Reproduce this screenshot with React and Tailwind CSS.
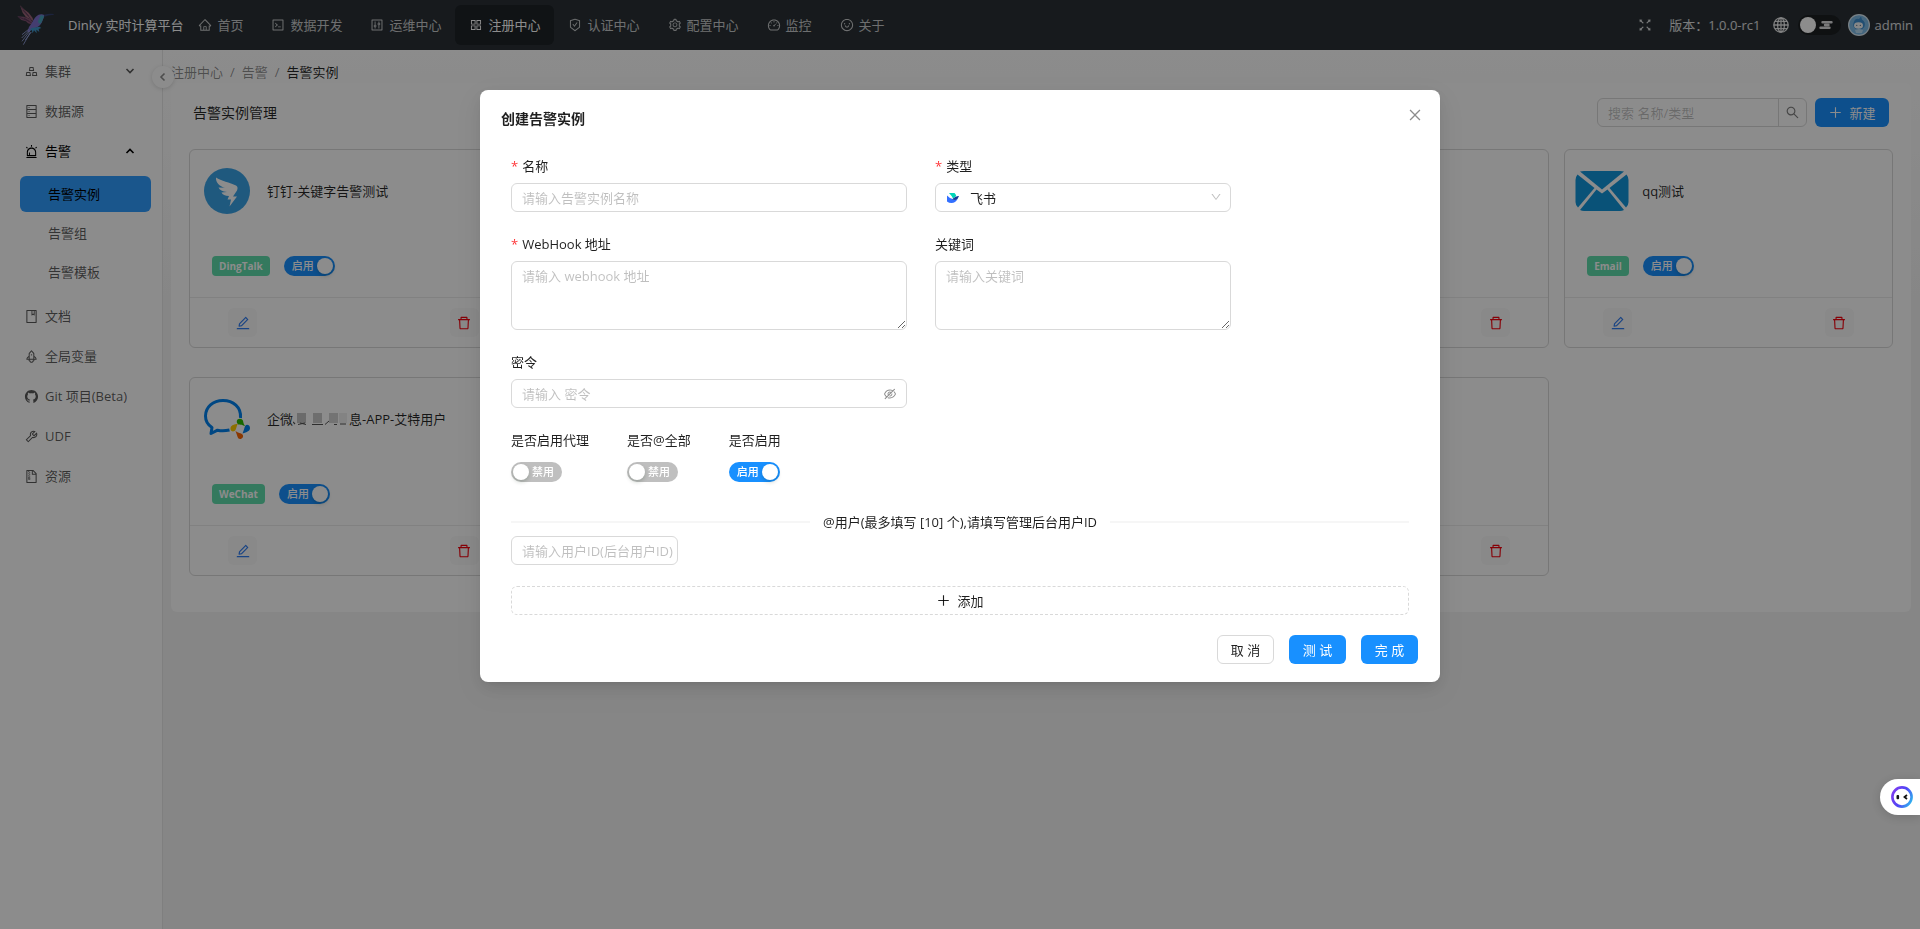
import React from 'react';
import {
  AiOutlineHome,
  AiOutlineCode,
  AiOutlineControl,
  AiOutlineAppstore,
  AiOutlineSafetyCertificate,
  AiOutlineSetting,
  AiOutlineDashboard,
  AiOutlineSmile,
  AiOutlineGold,
  AiOutlineDatabase,
  AiOutlineAlert,
  AiOutlineBook,
  AiOutlineRocket,
  AiFillGithub,
  AiOutlineTool,
  AiOutlineFileZip,
  AiOutlineFullscreen,
  AiOutlineEdit,
  AiOutlineDelete,
  AiOutlineSearch,
  AiOutlinePlus,
  AiOutlineClose,
  AiOutlineDown,
  AiOutlineEyeInvisible,
} from 'react-icons/ai';

const NAV = [
  { label: '首页', icon: AiOutlineHome },
  { label: '数据开发', icon: AiOutlineCode },
  { label: '运维中心', icon: AiOutlineControl },
  { label: '注册中心', icon: AiOutlineAppstore, active: true },
  { label: '认证中心', icon: AiOutlineSafetyCertificate },
  { label: '配置中心', icon: AiOutlineSetting },
  { label: '监控', icon: AiOutlineDashboard },
  { label: '关于', icon: AiOutlineSmile },
];

const MENU = [
  { label: '集群', icon: AiOutlineGold, arrow: 'down' },
  { label: '数据源', icon: AiOutlineDatabase },
  {
    label: '告警',
    icon: AiOutlineAlert,
    arrow: 'up',
    children: ['告警实例', '告警组', '告警模板'],
  },
  { label: '文档', icon: AiOutlineBook },
  { label: '全局变量', icon: AiOutlineRocket },
  { label: 'Git 项目(Beta)', icon: AiFillGithub },
  { label: 'UDF', icon: AiOutlineTool },
  { label: '资源', icon: AiOutlineFileZip },
];

const HummingbirdLogo = () => (
  <svg viewBox="0 0 120 126" className="h-[42px] w-10" aria-hidden="true">
    <path d="M12 4 L24 16 L38 26 L50 42 L52 52 L44 46 L30 40 L20 26 Z" fill="#9c6478" />
    <path d="M4 37 L24 38 L44 46 L52 58 L50 62 L36 58 L30 52 L16 48 Z" fill="#855272" />
    <path d="M14 8 L38 36 M20 18 L44 44 M8 39 L40 52 M24 42 L48 58" stroke="#4a3050" strokeWidth="2" fill="none" />
    <path d="M48 56 Q56 38 68 32 Q78 28 86 34 Q82 44 78 54 Q72 68 58 72 Q46 74 40 84 L34 84 Q38 66 48 56 Z" fill="#7d70cc" />
    <path d="M74 34 Q82 32 84 38 L76 56 Q68 64 66 52 Z" fill="#45a2ba" />
    <path d="M84 32 Q100 28 114 30 L112 33 Q98 32 86 38 Z" fill="#34406f" />
    <path d="M46 72 L70 68 L76 72 L68 75 L70 84 L61 77 L62 88 L54 79 L50 88 L47 78 L40 82 Z" fill="#3f95c8" />
    <path d="M38 76 L18 92 M40 79 L17 102 M41 82 L18 112 M43 85 L22 122 M46 84 L28 108" stroke="#94a1dc" strokeWidth="2.600" fill="none" />
  </svg>
);

const DingTalkLogo = () => (
  <svg viewBox="0 0 46 46" className="h-[46px] w-[46px]" aria-hidden="true">
    <circle cx="23" cy="23" r="23" fill="#3aa2e6" />
    <path
      d="M12 9.500 C17 13 26 14.500 32 17.500 C34 18.500 33.800 20.500 33 22.500 L29 28.500 L33 28.500 L25.500 38.500 L27 31.500 L23.500 31.500 L25 28 C21 28 18.500 26.500 17.500 24.500 L23 24 C18.500 23.500 15.500 22 14.500 19.500 L21 19.800 C15.500 18.500 11.500 14.500 12 9.500 Z"
      fill="#fff"
    />
  </svg>
);

const WeComLogo = () => (
  <svg viewBox="0 0 46 40" className="h-10 w-[46px]" aria-hidden="true">
    <path
      d="M36.500 19 C37.500 8 29 1.500 19 1.500 C9 1.500 1.500 8 1.500 17 C1.500 22 4 26 8 28.500 L7 34.500 L13.500 31.200 C17 32 21 32 25.500 31"
      fill="none"
      stroke="#0082ef"
      strokeWidth="3"
      strokeLinejoin="round"
    />
    <path d="M41.500 26.500 C42.500 25 46 25.800 46 29 C46 32 43 33 38.500 34.500 C40 31 40.300 28.500 41.500 26.500 Z" fill="#0082ef" />
    <path d="M33.500 20.500 C35.500 19 39 19.500 39.300 23 C39.400 24.500 40 25.500 41.500 27.500 C38 25.500 36.500 26 34.500 25.500 C32.500 24.500 32.300 22 33.500 20.500 Z" fill="#2dbc00" />
    <path d="M27 27.500 C28.500 25.500 32 25 34 24.800 C32.500 27 32.500 29 31.500 31 C30 33.500 26.500 32.500 26.500 30 C26.400 29 26.500 28.200 27 27.500 Z" fill="#fc0" />
    <path d="M31.500 32 C34 34 37 34 38.500 35.500 C40 37.500 38.500 40 36 40 C33.500 40 33.500 36.500 31.500 32 Z" fill="#fb6500" />
  </svg>
);

const EmailLogo = () => (
  <svg viewBox="0 0 54 40" className="h-10 w-[54px]" aria-hidden="true">
    <path d="M5 0.500 Q7 0 9 0 H45 Q47 0 49 0.500 L27 18.500 Z" fill="#1296db" />
    <path d="M2.500 3.500 L19.500 17 L3 36.500 Q0.500 34 0.500 31 V9 Q0.500 6 2.500 3.500 Z" fill="#1296db" />
    <path d="M51.500 3.500 L34.500 17 L51 36.500 Q53.500 34 53.500 31 V9 Q53.500 6 51.500 3.500 Z" fill="#1296db" />
    <path d="M5 39 L21.500 18.500 L27 22.500 L32.500 18.500 L49 39 Q47 40 45 40 H9 Q7 40 5 39 Z" fill="#1296db" />
  </svg>
);

const FeishuLogo = () => (
  <svg viewBox="0 0 24 20" className="h-[10px] w-3" aria-hidden="true">
    <path d="M4 0 H15 Q18 3 18.500 6 L12 11 Q9 5 4 0 Z" fill="#00d6b9" />
    <path d="M0 5 Q6 12 15 13.500 Q19 14 21 12 Q17 20 9 20 Q4 20 0 17 Z" fill="#3370ff" />
    <path d="M24 6 Q18 5 12 11 L11 13 Q18 15 21 12 Z" fill="#133c9a" />
  </svg>
);

const GlobeIcon = () => (
  <svg viewBox="0 0 16 16" className="h-4 w-4" fill="none" stroke="currentColor" strokeWidth="1.300" aria-hidden="true">
    <circle cx="8" cy="8" r="7.200" />
    <ellipse cx="8" cy="8" rx="3.400" ry="7.200" />
    <path d="M8 0.800 V15.200 M0.800 8 H15.200 M2 4.300 H14 M2 11.700 H14" />
  </svg>
);

const CloudIcon = () => (
  <svg viewBox="0 0 14 8" className="h-2 w-[14px]" stroke="currentColor" strokeWidth="2.400" strokeLinecap="round" aria-hidden="true">
    <path d="M3.500 1.200 H12.500 M6 4 H9.500 M1.500 6.800 H10.500" />
  </svg>
);

const Chevron = ({ dir }) => (
  <svg viewBox="0 0 10 10" className="h-[10px] w-[10px]" fill="none" stroke="currentColor" strokeWidth="1.600" aria-hidden="true">
    {dir === 'down' && <path d="M1.500 3 L5 6.500 L8.500 3" />}
    {dir === 'up' && <path d="M1.500 7 L5 3.500 L8.500 7" />}
    {dir === 'left' && <path d="M6.500 1.500 L3 5 L6.500 8.500" />}
  </svg>
);

const Avatar = () => (
  <svg viewBox="0 0 22 22" className="h-[22px] w-[22px]" role="img" aria-label="avatar">
    <circle cx="11" cy="11" r="11" fill="#dce9f2" />
    <circle cx="11" cy="11" r="9.800" fill="#7dbbe6" />
    <path d="M5.500 9 Q7 3.500 11 5 L13 2.500 L14 5.500 Q18 8 16.500 12.500 Q14 17 9 16 Q4 13 5.500 9 Z" fill="#3d8fd0" />
    <ellipse cx="10.500" cy="11.500" rx="4.500" ry="3.300" fill="#f3f6f8" />
    <circle cx="8.800" cy="11.300" r="0.600" fill="#35516b" />
    <circle cx="12.300" cy="11.300" r="0.600" fill="#35516b" />
    <path d="M7 16 Q11 14 15 16 L14 19 H8 Z" fill="#b9dcf4" />
  </svg>
);

// Pixelated part of a masked instance name
const Mosaic = () => (
  <svg viewBox="0 0 56 14" className="h-[14px] w-14 shrink-0" aria-hidden="true">
    <path d="M0 10 L2 12" stroke="#555" strokeWidth="1.200" />
    <rect x="4" y="1" width="9" height="10" fill="#c4c4c4" />
    <rect x="20" y="1" width="9" height="10" fill="#c8c8c8" />
    <rect x="36" y="1" width="9" height="10" fill="#d2d2d2" />
    <rect x="46" y="1" width="8" height="10" fill="#efefef" />
    <path d="M5 12.500 L12 11 M7 11 L13 12.500 M19 12.500 H30 M32 12.500 L36 9 M41 12.500 H44 M47 12 H53" stroke="#555" strokeWidth="1" fill="none" />
  </svg>
);

const CARDS = [
  { id: 1, name: '钉钉-关键字告警测试', type: 'DingTalk', logo: DingTalkLogo },
  { id: 2 },
  { id: 3 },
  { id: 4 },
  { id: 5, name: 'qq测试', type: 'Email', logo: EmailLogo },
  { id: 6, name: ['企微', '息-APP-艾特用户'], type: 'WeChat', logo: WeComLogo },
  { id: 7 },
  { id: 8 },
  { id: 9 },
];

const Switch = ({ id, on, label }) => (
  <label
    htmlFor={id}
    className={`inline-flex h-5 w-[51px] shrink-0 cursor-pointer items-center justify-between rounded-full text-[11px] leading-5 font-medium text-white ${
      on ? 'flex-row-reverse bg-[#1890ff] pr-[2px] pl-2' : 'bg-[#bfbfbf] pr-2 pl-[2px]'
    }`}
  >
    <input id={id} type="checkbox" role="switch" aria-label={label} defaultChecked={on} className="sr-only" />
    <span className="h-4 w-4 rounded-full bg-white shadow-[0_2px_4px_rgba(0,35,11,0.2)]" />
    <span>{on ? '启用' : '禁用'}</span>
  </label>
);

const Header = () => (
  <header className="flex h-[50px] items-center bg-[#2a3136] pr-[7px] pl-4 text-white/85">
    <a href="#home" className="flex items-center gap-3 text-white">
      <HummingbirdLogo />
      <span>Dinky 实时计算平台</span>
    </a>
    <nav className="flex flex-1 pl-px">
      {NAV.map(({ label, icon: Icon, active }) => (
        <a
          key={label}
          href="#nav"
          className={`flex h-10 items-center gap-[5px] rounded-md px-[14px] ${active ? 'bg-[#1e2327] text-white' : 'text-white/75'}`}
        >
          <Icon className="h-[14px] w-[14px]" />
          {label}
        </a>
      ))}
    </nav>
    <div className="flex items-center">
      <button type="button" aria-label="全屏" className="mr-4">
        <AiOutlineFullscreen className="h-4 w-4" />
      </button>
      <span className="mr-3">版本：1.0.0-rc1</span>
      <button type="button" aria-label="语言" className="mr-[9px]">
        <GlobeIcon />
      </button>
      <label className="mr-[7px] flex h-5 w-[43px] items-center justify-between rounded-full bg-[#1c1f22] pr-2 pl-[2px]">
        <input type="checkbox" role="switch" aria-label="主题" className="sr-only" />
        <span className="h-4 w-4 rounded-full bg-white" />
        <CloudIcon />
      </label>
      <button type="button" className="flex items-center gap-[5px]">
        <Avatar />
        admin
      </button>
    </div>
  </header>
);

const Sidebar = () => (
  <aside className="relative w-[163px] shrink-0 border-r border-[#e8e8e8] bg-white pt-[3px] text-black/65">
    <ul className="flex flex-col gap-1">
      {MENU.map(({ label, icon: Icon, arrow, children }) => (
        <li key={label}>
          <a href="#menu" className={`flex h-9 items-center gap-[6px] pr-[27px] pl-6 ${children ? 'text-black' : ''}`}>
            <Icon className="h-[15px] w-[15px]" />
            <span className="flex-1">{label}</span>
            {arrow && <Chevron dir={arrow} />}
          </a>
          {children && (
            <ul className="flex flex-col gap-[3px] pt-[7px] pr-[11px] pb-1 pl-5">
              {children.map((child, i) => (
                <li key={child}>
                  <a
                    href="#submenu"
                    className={`flex h-9 items-center rounded-md pl-7 ${i === 0 ? 'bg-[#319dff] text-black' : ''}`}
                  >
                    {child}
                  </a>
                </li>
              ))}
            </ul>
          )}
        </li>
      ))}
    </ul>
    <button
      type="button"
      aria-label="收起菜单"
      className="absolute top-4 -right-3 flex h-[22px] w-[22px] items-center justify-center rounded-full bg-white text-black/45 shadow-[0_1px_4px_rgba(0,0,0,0.15)]"
    >
      <Chevron dir="left" />
    </button>
  </aside>
);

const AlertCard = ({ id, name, type, logo: Logo }) => (
  <article className="flex h-[199px] flex-col rounded-md border border-[#d9d9d9]">
    <div className="flex-1 px-[9px] pt-[14px]">
      {name && (
        <>
          <div className="flex h-[54px] items-center gap-3">
            <div className="flex w-14 justify-center">
              <Logo />
            </div>
            <h3 className="flex items-center text-black/85">
              {Array.isArray(name) ? (
                <>
                  {name[0]}
                  <Mosaic />
                  {name[1]}
                </>
              ) : (
                name
              )}
            </h3>
          </div>
          <div className="mt-[38px] flex items-center gap-[14px] pl-[13px]">
            <span className="rounded-sm bg-[#5fdcab] px-[7px] text-[10px] leading-5 font-bold text-white">{type}</span>
            <Switch id={`card-${id}`} on label={`${type} 启用`} />
          </div>
        </>
      )}
    </div>
    <div className="flex h-[50px] items-center justify-between border-t border-[#ececec] px-[38px]">
      <button type="button" aria-label="编辑" className="flex h-[29px] w-[29px] items-center justify-center rounded-md bg-[#f9f9f9] text-[#2f7cf0]">
        <AiOutlineEdit className="h-4 w-4" />
      </button>
      <button type="button" aria-label="删除" className="flex h-[29px] w-[29px] items-center justify-center rounded-md bg-[#f9f9f9] text-[#f5000c]">
        <AiOutlineDelete className="h-4 w-4" />
      </button>
    </div>
  </article>
);

const InstancePage = () => (
  <main className="min-w-0 flex-1 bg-[linear-gradient(#ffffff,#f5f5f5_28%)] pr-[9px] pl-2">
    <nav aria-label="breadcrumb" className="flex h-[33px] items-center pt-[11px] text-black/45">
      <a href="#registration">注册中心</a>
      <span className="mx-[7px]">/</span>
      <a href="#alert">告警</a>
      <span className="mx-[7px]">/</span>
      <span className="text-black/85">告警实例</span>
    </nav>
    <section className="h-[529px] rounded-md bg-white px-[18px] pt-[15px]">
      <div className="flex items-center pr-1 pl-1">
        <h2 className="flex-1 text-sm text-black/85">告警实例管理</h2>
        <form className="flex h-[29px] w-[210px] rounded-md border border-[#d9d9d9]">
          <input
            type="search"
            aria-label="搜索"
            placeholder="搜索 名称/类型"
            className="min-w-0 flex-1 bg-transparent px-[10px] outline-none placeholder:text-black/25"
          />
          <button type="button" aria-label="搜索" className="flex w-7 items-center justify-center border-l border-[#d9d9d9] text-black/50">
            <AiOutlineSearch className="h-[15px] w-[15px]" />
          </button>
        </form>
        <button type="button" className="ml-2 flex h-[29px] w-[74px] items-center justify-center gap-[6px] rounded-md bg-[#1890ff] text-white">
          <AiOutlinePlus className="h-[15px] w-[15px]" />
          新建
        </button>
      </div>
      <div className="mt-[22px] grid grid-cols-5 gap-x-[15px] gap-y-[29px]">
        {CARDS.map((card) => (
          <AlertCard key={card.id} {...card} />
        ))}
      </div>
    </section>
  </main>
);

const Field = ({ id, label, required, className, children }) => (
  <div className={`flex flex-col gap-[7px] ${className || ''}`}>
    <label htmlFor={id} className="flex text-black/88">
      {required && <span className="mr-1 text-[#ff3639]">*</span>}
      {label}
    </label>
    {children}
  </div>
);

const inputClass =
  'w-full rounded-md border border-[#d9d9d9] bg-white pl-[10px] text-black/88 outline-none placeholder:text-black/25';

const SWITCHES = [
  { id: 'proxy', label: '是否启用代理', on: false },
  { id: 'at-all', label: '是否@全部', on: false },
  { id: 'enabled', label: '是否启用', on: true },
];

const CreateModal = () => (
  <div className="fixed inset-0 bg-black/45 pt-[90px]">
    <div
      role="dialog"
      aria-labelledby="modal-title"
      className="relative mx-auto w-1/2 rounded-lg bg-white px-[21px] pt-[19px] pb-[18px] shadow-[0_6px_16px_rgba(0,0,0,0.08),0_3px_6px_-4px_rgba(0,0,0,0.12),0_9px_28px_8px_rgba(0,0,0,0.05)]"
    >
      <h1 id="modal-title" className="text-sm font-semibold text-black/88">
        创建告警实例
      </h1>
      <button type="button" aria-label="关闭" className="absolute top-[17px] right-[17px] text-black/45">
        <AiOutlineClose className="h-4 w-4" />
      </button>

      <form className="mt-[27px] px-[10px]">
        <div className="flex flex-col gap-[22px]">
          <div className="flex gap-7">
            <Field id="name" label="名称" required className="w-[396px]">
              <input id="name" type="text" placeholder="请输入告警实例名称" className={`h-[29px] ${inputClass}`} />
            </Field>
            <Field id="type" label="类型" required className="w-[296px]">
              <div className="relative">
                <select
                  id="type"
                  className="h-[29px] w-full appearance-none rounded-md border border-[#d9d9d9] bg-white pl-[34px] text-black/88 outline-none"
                >
                  <option>飞书</option>
                </select>
                <span className="pointer-events-none absolute inset-y-0 left-3 flex items-center">
                  <FeishuLogo />
                </span>
                <AiOutlineDown className="pointer-events-none absolute top-2 right-[9px] h-3 w-3 text-black/25" />
              </div>
            </Field>
          </div>

          <div className="flex gap-7">
            <Field id="webhook" label="WebHook 地址" required className="w-[396px]">
              <textarea id="webhook" placeholder="请输入 webhook 地址" className={`h-[69px] py-1 ${inputClass}`} />
            </Field>
            <Field id="keyword" label="关键词" className="w-[296px]">
              <textarea id="keyword" placeholder="请输入关键词" className={`h-[69px] py-1 ${inputClass}`} />
            </Field>
          </div>

          <Field id="secret" label="密令" className="w-[396px]">
            <div className="relative">
              <input id="secret" type="password" placeholder="请输入 密令" className={`h-[29px] ${inputClass}`} />
              <button type="button" aria-label="显示密令" className="absolute inset-y-0 right-[10px] text-black/45">
                <AiOutlineEyeInvisible className="h-[14px] w-[14px]" />
              </button>
            </div>
          </Field>

          <div className="flex gap-[38px]">
            {SWITCHES.map(({ id, label, on }) => (
              <Field key={id} id={id} label={label}>
                <div className="flex h-[29px] items-center">
                  <Switch id={id} on={on} label={label} />
                </div>
              </Field>
            ))}
          </div>
        </div>

        <div className="mt-[26px] flex items-center gap-[13px] text-black/88">
          <span className="h-[2px] flex-1 bg-[#f6f6f6]" />
          <label htmlFor="user-id">@用户(最多填写 [10] 个),请填写管理后台用户ID</label>
          <span className="h-[2px] flex-1 bg-[#f6f6f6]" />
        </div>
        <div className="mt-1 w-[167px]">
          <input id="user-id" type="text" placeholder="请输入用户ID(后台用户ID)" className={`h-[29px] ${inputClass}`} />
        </div>
        <button
          type="button"
          className="mt-[21px] flex h-[29px] w-full items-center justify-center gap-[6px] rounded-md border border-dashed border-[#d9d9d9] text-black/88"
        >
          <AiOutlinePlus className="h-[15px] w-[15px]" />
          添加
        </button>
      </form>

      <div className="mt-5 flex justify-end gap-[15px] pr-px">
        <button type="button" className="h-[29px] w-[57px] rounded-md border border-[#d9d9d9] bg-white text-black/88">
          取 消
        </button>
        <button type="button" className="h-[29px] w-[57px] rounded-md bg-[#1890ff] text-white">
          测 试
        </button>
        <button type="button" className="h-[29px] w-[57px] rounded-md bg-[#1890ff] text-white">
          完 成
        </button>
      </div>
    </div>
  </div>
);

const AssistantButton = () => (
  <button
    type="button"
    aria-label="助手"
    className="fixed right-0 bottom-[114px] flex h-9 w-10 items-center rounded-l-full bg-white pl-[11px] shadow-[0_2px_10px_rgba(0,0,0,0.15)]"
  >
    <svg viewBox="0 0 22 22" className="h-[22px] w-[22px]" aria-hidden="true">
      <defs>
        <linearGradient id="ring" x1="0" y1="0.300" x2="1" y2="0.800">
          <stop offset="0" stopColor="#7a3cf0" />
          <stop offset="0.500" stopColor="#4f46f5" />
          <stop offset="1" stopColor="#2fb4ee" />
        </linearGradient>
      </defs>
      <circle cx="11" cy="11" r="9.600" fill="#fff" stroke="url(#ring)" strokeWidth="2.600" />
      <rect x="5.500" y="9" width="2.600" height="4.200" rx="1" fill="#111" />
      <path d="M16 9 L13.500 11 L16 13" stroke="#111" strokeWidth="1.800" fill="none" />
    </svg>
  </button>
);

const App = () => {
  return (
    <div className="flex min-h-screen flex-col bg-[#f5f5f5] font-['Open_Sans','Noto_Sans_CJK_SC',sans-serif] text-[13px] leading-5">
      <Header />
      <div className="flex flex-1">
        <Sidebar />
        <InstancePage />
      </div>
      <CreateModal />
      <AssistantButton />
    </div>
  );
};

export default App;
